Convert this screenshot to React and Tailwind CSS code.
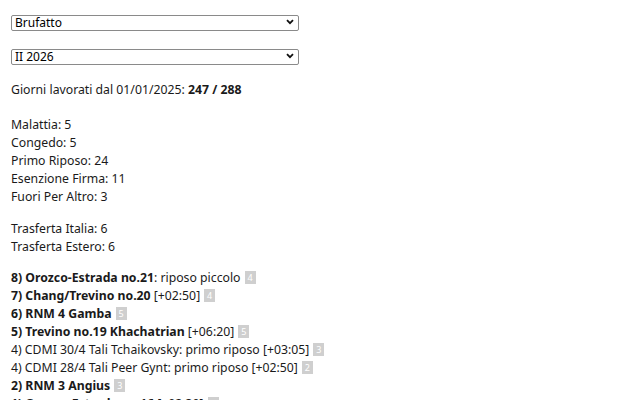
import React from "react";

function Select({ value, options }) {
    return (
        <div className="relative w-[288px] h-[16px]">
            <select
                defaultValue={value}
                className="appearance-none w-full h-full border border-[#8a8a8a] rounded-[2px] bg-white pl-[3px] text-[12px] leading-[14px] text-black outline-none"
            >
                {options.map((o) => (
                    <option key={o}>{o}</option>
                ))}
            </select>
            <svg className="absolute right-[5px] top-[5px] pointer-events-none" width="8" height="6" viewBox="0 0 8 6">
                <path d="M1 1.2 L4 4.2 L7 1.2" fill="none" stroke="#111" strokeWidth="1.8" />
            </svg>
        </div>
    );
}

function Badge({ n }) {
    return (
        <span className="inline-block w-[11px] h-[13px] ml-[4px] bg-[#cfcfcf] text-white text-[9px] leading-[13px] text-center align-middle -mt-[2px]">
            {n}
        </span>
    );
}

const eventi = [
    { b: "8) Orozco-Estrada no.21", t: ": riposo piccolo", n: 4 },
    { b: "7) Chang/Trevino no.20", t: " [+02:50]", n: 4 },
    { b: "6) RNM 4 Gamba", t: "", n: 5 },
    { b: "5) Trevino no.19 Khachatrian", t: " [+06:20]", n: 5 },
    { b: "", t: "4) CDMI 30/4 Tali Tchaikovsky: primo riposo [+03:05]", n: 3 },
    { b: "", t: "4) CDMI 28/4 Tali Peer Gynt: primo riposo [+02:50]", n: 2 },
    { b: "2) RNM 3 Angius", t: "", n: 3 },
    { b: "1) Orozco-Estrada no.16", t: " [+02:30]", n: 2 },
];

export default function App() {
    return (
        <div className="h-screen overflow-hidden bg-white px-[11px] pt-[14px] text-[12.25px] leading-[18px] text-[#1a1a1a] font-['Noto_Sans',sans-serif]">
            <Select value="Brufatto" options={["Brufatto"]} />
            <div className="mt-[18px]">
                <Select value="II 2026" options={["II 2026"]} />
            </div>

            <p className="mt-[17px]">
                Giorni lavorati dal 01/01/2025: <b>247 / 288</b>
            </p>

            <div className="mt-[17px]">
                <div>Malattia: 5</div>
                <div>Congedo: 5</div>
                <div>Primo Riposo: 24</div>
                <div>Esenzione Firma: 11</div>
                <div>Fuori Per Altro: 3</div>
            </div>

            <div className="mt-[14px]">
                <div>Trasferta Italia: 6</div>
                <div>Trasferta Estero: 6</div>
            </div>

            <div className="mt-[13px]">
                {eventi.map((e, i) => (
                    <div key={i} className="h-[18px] whitespace-nowrap">
                        {e.b && <b>{e.b}</b>}
                        {e.t}
                        <Badge n={e.n} />
                    </div>
                ))}
            </div>
        </div>
    );
}
